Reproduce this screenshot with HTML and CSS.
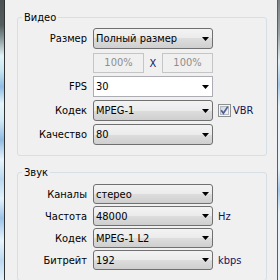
FILE: index.html
```html
<!DOCTYPE html>
<html lang="ru">
<head>
<meta charset="utf-8">
<link rel="stylesheet" href="styles.css">
</head>
<body>
<div class="window">
  <div class="frame-left"></div>
  <div class="content">
    <fieldset class="group group-video">
      <legend>Видео</legend>
      <div class="rows">
        <span class="lbl">Размер</span>
        <div class="combo"><span>Полный размер</span><svg class="arrow" width="7" height="4" viewBox="0 0 7 4"><polygon points="0,0 7,0 3.5,4" fill="#000"/></svg></div>
        <span></span>

        <span class="lbl"></span>
        <div class="pair"><div class="dis">100%</div><span class="x">X</span><div class="dis">100%</div></div>
        <span></span>

        <span class="lbl">FPS</span>
        <div class="combo edit"><span>30</span><svg class="arrow" width="7" height="4" viewBox="0 0 7 4"><polygon points="0,0 7,0 3.5,4" fill="#000"/></svg></div>
        <span></span>

        <span class="lbl">Кодек</span>
        <div class="combo"><span>MPEG-1</span><svg class="arrow" width="7" height="4" viewBox="0 0 7 4"><polygon points="0,0 7,0 3.5,4" fill="#000"/></svg></div>
        <span class="extra check"><svg width="13" height="13" viewBox="0 0 13 13"><defs><linearGradient id="cb" x1="0" y1="0" x2="1" y2="1"><stop offset="0" stop-color="#cfd3d8"/><stop offset="1" stop-color="#f7f7f7"/></linearGradient></defs><rect x="0.5" y="0.5" width="12" height="12" fill="#f6f6f6" stroke="#8e8f8f"/><rect x="2.5" y="2.5" width="8" height="8" fill="url(#cb)" stroke="#b4b8be"/><path d="M3.2 6.3 L5.4 9.3 L9.8 2.6" stroke="#4b5e9c" stroke-width="1.7" fill="none"/></svg><span class="unit">VBR</span></span>

        <span class="lbl">Качество</span>
        <div class="combo"><span>80</span><svg class="arrow" width="7" height="4" viewBox="0 0 7 4"><polygon points="0,0 7,0 3.5,4" fill="#000"/></svg></div>
        <span></span>
      </div>
    </fieldset>

    <fieldset class="group group-audio">
      <legend>Звук</legend>
      <div class="rows">
        <span class="lbl">Каналы</span>
        <div class="combo"><span>стерео</span><svg class="arrow" width="7" height="4" viewBox="0 0 7 4"><polygon points="0,0 7,0 3.5,4" fill="#000"/></svg></div>
        <span></span>

        <span class="lbl">Частота</span>
        <div class="combo"><span>48000</span><svg class="arrow" width="7" height="4" viewBox="0 0 7 4"><polygon points="0,0 7,0 3.5,4" fill="#000"/></svg></div>
        <span class="extra unit">Hz</span>

        <span class="lbl">Кодек</span>
        <div class="combo"><span>MPEG-1 L2</span><svg class="arrow" width="7" height="4" viewBox="0 0 7 4"><polygon points="0,0 7,0 3.5,4" fill="#000"/></svg></div>
        <span></span>

        <span class="lbl">Битрейт</span>
        <div class="combo"><span>192</span><svg class="arrow" width="7" height="4" viewBox="0 0 7 4"><polygon points="0,0 7,0 3.5,4" fill="#000"/></svg></div>
        <span class="extra unit">kbps</span>
      </div>
    </fieldset>
  </div>
  <div class="frame-right"></div>
</div>
</body>
</html>
```

FILE: styles.css
```css
* { box-sizing: border-box; }
html, body { margin: 0; padding: 0; }
body {
  width: 280px;
  height: 280px;
  overflow: hidden;
  background: #f0f0f0;
  font-family: "DejaVu Sans Condensed", "DejaVu Sans", sans-serif;
  font-stretch: condensed;
  font-size: 11px;
  color: #000;
}
.window { display: flex; height: 280px; }
.frame-left {
  flex: none;
  width: 5px;
  border-right: 1px solid #2f3333;
  background: linear-gradient(180deg, #4a5151 0%, #545d5d 9%, #8d9c9e 14%, #e2f4f8 20%, #c9e6f2 25%, #8fbde3 31%, #e6f5fa 37%, #d2eaf6 43%, #90bbe2 50%, #e8f5fb 57%, #b9d8f0 64%, #e4f2fa 71%, #9cc4e8 78%, #e8f5fb 86%, #bcd9f1 93%, #e2f0f9 100%);
}
.frame-right {
  flex: none;
  width: 3px;
  border-left: 1px solid #5a5e60;
  background: linear-gradient(180deg, #7b8283 0%, #9aa4a6 12%, #e0eef3 22%, #a8c8e6 30%, #e4f1f7 38%, #e8f3f8 60%, #a8c9e8 68%, #e6f2f8 76%, #e8f3f8 100%);
}
.content {
  flex: 1;
  min-width: 0;
  padding: 11px 10px 0 12px;
  display: flex;
  flex-direction: column;
  gap: 10px;
}
.group {
  margin: 0;
  min-width: 0;
  border: 1px solid #d5dfe5;
  border-radius: 3px;
  padding: 4px 0 10px 0;
}
.group legend {
  margin-left: 4px;
  padding: 0 2px;
  line-height: 13px;
}
.group-audio { padding-top: 5px; }
.rows {
  display: grid;
  grid-template-columns: 75px 120px auto;
  row-gap: 3px;
  align-items: center;
}
.group-audio .rows { row-gap: 2px; }
.lbl {
  text-align: right;
  padding-right: 6px;
  white-space: nowrap;
}
.combo {
  height: 21px;
  border: 1px solid #707070;
  border-radius: 3px;
  background: linear-gradient(180deg, #f3f3f3 0%, #ebebeb 50%, #dddddd 50%, #cfcfcf 100%);
  display: flex;
  align-items: center;
  justify-content: space-between;
  padding: 0 3px 0 2px;
  white-space: nowrap;
}
.group-audio .combo { height: 20px; }
.combo.edit {
  background: #fff;
  border-color: #abadb3;
  border-radius: 0;
}
.arrow { flex: none; display: block; }
.pair {
  display: flex;
  align-items: center;
  justify-content: space-between;
  height: 21px;
  padding-top: 1px;
}
.dis {
  width: 51px;
  height: 20px;
  border: 1px solid #c5c5c5;
  background: #f0f0f0;
  color: #8d8d8d;
  text-align: center;
  line-height: 18px;
}
.x { color: #15155a; }
.extra {
  padding-left: 5px;
  display: flex;
  align-items: center;
  gap: 2px;
}
.check svg { display: block; }
.unit { color: #15155a; }
```
